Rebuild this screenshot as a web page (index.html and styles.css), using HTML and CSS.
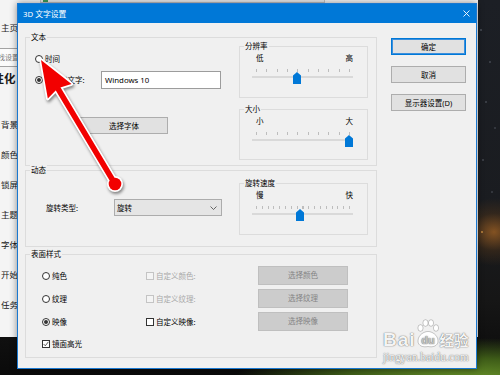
FILE: index.html
```html
<!DOCTYPE html>
<html lang="zh-CN">

<head>
  <meta charset="UTF-8">
  <meta name="viewport" content="width=device-width, initial-scale=1.0">
  <title>3D 文字设置</title>
  <link rel="stylesheet" href="styles.css">
</head>

<body>

  <!-- settings window behind the dialog -->
  <div class="settings">
    <div class="topbar"><span class="topicon"></span></div>
    <div class="nav">
      <div class="nav-home">主页</div>
      <div class="nav-search">查找设置</div>
      <div class="nav-head">个性化</div>
      <ul class="nav-list">
        <li>背景</li>
        <li>颜色</li>
        <li>锁屏界面</li>
        <li>主题</li>
        <li>字体</li>
        <li>开始</li>
        <li>任务栏</li>
      </ul>
    </div>
  </div>

  <div class="dialog">
    <div class="titlebar">
      <span>3D 文字设置</span>
      <svg class="close" width="7" height="7" viewBox="0 0 7 7">
        <path d="M0.5 0.5 L6.5 6.5 M6.5 0.5 L0.5 6.5" stroke="#fff" stroke-width="0.9" fill="none" />
      </svg>
    </div>

    <div class="dialog-body">
      <div class="groups">

        <div class="group group-text">
          <span class="group-title">文本</span>
          <div class="group-main">
            <div class="row row-time"><span class="radio"></span>时间</div>
            <div class="row row-custom">
              <span class="radio on"></span>
              <span class="custom-label">自定义文字:</span>
              <div class="textbox">Windows 10</div>
            </div>
            <div class="btn btn-font">选择字体</div>
          </div>
          <div class="group-side">
            <div class="sub sub-res">
              <span class="group-title">分辨率</span>
              <div class="scale"><span>低</span><span>高</span></div>
              <div class="slider">
                <div class="ticks ticks-10"></div>
                <div class="track"></div>
                <div class="thumb" style="left: 41px"></div>
              </div>
            </div>
            <div class="sub sub-size">
              <span class="group-title">大小</span>
              <div class="scale"><span>小</span><span>大</span></div>
              <div class="slider">
                <div class="ticks ticks-10"></div>
                <div class="track"></div>
                <div class="thumb" style="left: 93px"></div>
              </div>
            </div>
          </div>
        </div>

        <div class="group group-motion">
          <span class="group-title">动态</span>
          <div class="group-main motion-main">
            <div class="row">
              <span class="type-label">旋转类型:</span>
              <div class="select">
                <span>旋转</span>
                <svg width="7" height="4" viewBox="0 0 7 4">
                  <polyline points="0.5,0.5 3.5,3.5 6.5,0.5" stroke="#444" stroke-width="0.8" fill="none" />
                </svg>
              </div>
            </div>
          </div>
          <div class="group-side">
            <div class="sub sub-speed">
              <span class="group-title">旋转速度</span>
              <div class="scale"><span>慢</span><span>快</span></div>
              <div class="slider">
                <div class="ticks ticks-17"></div>
                <div class="track"></div>
                <div class="thumb" style="left: 44px"></div>
              </div>
            </div>
          </div>
        </div>

        <div class="group group-surface">
          <span class="group-title">表面样式</span>
          <div class="surface">
            <div class="opt"><span class="radio"></span>纯色</div>
            <div class="opt disabled"><span class="check"></span>自定义颜色:</div>
            <div class="btn btn-disabled">选择颜色</div>

            <div class="opt"><span class="radio"></span>纹理</div>
            <div class="opt disabled"><span class="check"></span>自定义纹理:</div>
            <div class="btn btn-disabled">选择纹理</div>

            <div class="opt"><span class="radio on"></span>映像</div>
            <div class="opt"><span class="check"></span>自定义映像:</div>
            <div class="btn btn-disabled">选择映像</div>

            <div class="opt opt-last">
              <span class="check">
                <svg width="6" height="6" viewBox="0 0 6 6">
                  <polyline points="0.6,3 2.3,4.8 5.4,0.8" stroke="#333" stroke-width="0.8" fill="none" />
                </svg>
              </span>镜面高光
            </div>
          </div>
        </div>

      </div>

      <div class="actions">
        <div class="btn btn-default">确定</div>
        <div class="btn">取消</div>
        <div class="btn">显示器设置(D)</div>
      </div>
    </div>
  </div>

  <!-- red pointer drawn on top of the screenshot -->
  <svg class="pointer" width="500" height="375" viewBox="0 0 500 375">
    <g class="arrow">
      <line x1="57" y1="87" x2="115" y2="184" stroke="#fff" stroke-width="9" stroke-linecap="round" />
      <polygon points="41,60 71.5,84 57.9,88.3 47.8,98.6" fill="#fff" stroke="#fff" stroke-width="3.5"
        stroke-linejoin="round" />
      <circle cx="115" cy="184" r="8" fill="#fff" />
      <line x1="57" y1="87" x2="115" y2="184" stroke="#f20000" stroke-width="5.5" stroke-linecap="round" />
      <polygon points="41,60 71.5,84 57.9,88.3 47.8,98.6" fill="#f20000" />
      <circle cx="115" cy="184" r="6.3" fill="#f20000" />
    </g>
  </svg>

  <div class="watermark">
    <div class="wm-brand">
      <span class="wm-bai">Bai</span>
      <svg class="wm-paw" width="24" height="29" viewBox="0 0 24 29">
        <ellipse cx="4.5" cy="9" rx="2.6" ry="3.3" />
        <ellipse cx="9.5" cy="4" rx="2.6" ry="3.3" />
        <ellipse cx="15" cy="4" rx="2.6" ry="3.3" />
        <ellipse cx="20" cy="9" rx="2.6" ry="3.3" />
        <path d="M2 22 C2 16 8 12.5 12 12.5 C16 12.5 22 16 22 22 C22 27 17 28.5 12 27.5 C7 28.5 2 27 2 22 Z" />
        <text x="12" y="25" text-anchor="middle">du</text>
      </svg>
      <span class="wm-jy">经验</span>
    </div>
    <div class="wm-url">jingyan.baidu.com</div>
  </div>

</body>

</html>
```

FILE: styles.css
```css
* {
  margin: 0;
  padding: 0;
  box-sizing: border-box;
}

html,
body {
  width: 500px;
  height: 375px;
  overflow: hidden;
}

body {
  position: relative;
  font-family: "Noto Sans", "Noto Sans CJK SC", sans-serif;
  color: #000;
  background:
    radial-gradient(circle 1px at 481px 30px, rgba(190, 200, 220, 0.7), transparent),
    radial-gradient(circle 1px at 490px 62px, rgba(190, 200, 220, 0.6), transparent),
    radial-gradient(circle 1px at 486px 102px, rgba(190, 200, 220, 0.6), transparent),
    radial-gradient(circle 1px at 495px 128px, rgba(190, 200, 220, 0.5), transparent),
    radial-gradient(circle 1px at 483px 160px, rgba(190, 200, 220, 0.6), transparent),
    radial-gradient(circle 1px at 492px 192px, rgba(190, 200, 220, 0.5), transparent),
    radial-gradient(circle 1.5px at 482px 232px, rgba(255, 180, 80, 0.9), transparent),
    radial-gradient(ellipse 40px 34px at 494px 232px, rgba(150, 92, 35, 0.85), rgba(80, 52, 25, 0.45) 55%, transparent 100%),
    radial-gradient(ellipse 240px 46px at 470px 384px, #6f9b2c, #3e5c18 55%, transparent 100%),
    linear-gradient(#1c1f25, #1a1c20 55%, #161616 80%, #0a0a0a);
}

/* settings window in the back */
.settings {
  position: absolute;
  left: -30px;
  top: 0;
  width: 508px;
  height: 337px;
  background: #f4f4f4;
}

.topbar {
  display: flex;
  align-items: flex-end;
  width: 285px;
  height: 17px;
  margin: -14px 0 0 70px;
  padding: 0 0 0 2px;
  background: #e9e9e9;
  border: 1px solid #c3c3c3;
}

.topicon {
  width: 5px;
  height: 4px;
  background: #3a9a5a;
}

.nav {
  padding: 9px 0 0 31px;
  font-family: "Noto Sans CJK SC", sans-serif;
  font-size: 8.5px;
  color: #1a1a1a;
}

.nav-home {
  height: 30px;
  line-height: 30px;
}

.nav-search {
  width: 200px;
  height: 19px;
  margin: 6px 0 0 -15px;
  padding-left: 4px;
  border: 1px solid #a3a3a3;
  background: #fbfbfb;
  font-size: 7px;
  line-height: 17px;
  color: #777;
}

.nav-head {
  height: 22px;
  margin-left: -20px;
  font-size: 11.5px;
  font-weight: bold;
  line-height: 22px;
}

.nav-list {
  list-style: none;
  margin-top: 20px;
}

.nav-list li {
  height: 30px;
  line-height: 30px;
}

/* dialog */
.dialog {
  position: absolute;
  left: 17px;
  top: 3px;
  width: 460px;
  height: 366px;
  border: 1px solid #1a78d0;
  background: #f0f0f0;
  box-shadow: 0 0 7px rgba(0, 0, 0, 0.45);
  font-size: 7.5px;
  line-height: 10px;
}

.titlebar {
  display: flex;
  align-items: center;
  justify-content: space-between;
  height: 19px;
  padding: 0 6px 0 5px;
  background: #0078d7;
  color: #fff;
  font-size: 7.8px;
}

.dialog-body {
  display: flex;
  gap: 14px;
  padding: 14px 10px 0 7px;
}

.groups {
  display: flex;
  flex-direction: column;
  width: 352px;
}

.group {
  position: relative;
  display: flex;
  border: 1px solid #dcdcdc;
}

.group-text {
  height: 129px;
}

.group-motion {
  height: 77px;
  margin-top: 4px;
}

.group-surface {
  display: block;
  height: 104px;
  margin-top: 7px;
}

.group-title {
  position: absolute;
  top: -6px;
  left: 4px;
  padding: 0 1px;
  background: #f0f0f0;
  line-height: 11px;
}

.group-main {
  flex: 1;
  padding: 16px 0 0 9px;
}

.group-side {
  display: flex;
  flex-direction: column;
  width: 129px;
  margin-right: 8px;
}

.row {
  display: flex;
  align-items: center;
  gap: 2px;
}

.row-time {
  height: 10px;
}

.row-custom {
  height: 18px;
  margin-top: 7px;
}

.custom-label {
  width: 54px;
}

.textbox {
  width: 120px;
  height: 18px;
  padding-left: 3px;
  border: 1px solid #9c9c9c;
  background: #fff;
  font-size: 7.8px;
  line-height: 16px;
}

.radio {
  display: grid;
  place-items: center;
  width: 8px;
  height: 8px;
  border: 1px solid #333;
  border-radius: 50%;
  background: #fff;
  flex-shrink: 0;
}

.radio.on::after {
  content: "";
  width: 4px;
  height: 4px;
  border-radius: 50%;
  background: #333;
}

.check {
  display: grid;
  place-items: center;
  width: 8px;
  height: 8px;
  border: 1px solid #333;
  background: #fff;
  flex-shrink: 0;
}

.btn {
  display: flex;
  align-items: center;
  justify-content: center;
  height: 17px;
  border: 1px solid #adadad;
  background: #e1e1e1;
}

.btn-font {
  width: 88px;
  margin: 28px 0 0 45px;
}

.btn-default {
  border-color: #0078d7;
  box-shadow: inset 0 0 0 1px #3c8fdc;
}

.btn-disabled {
  width: 90px;
  height: 19px;
  border-color: #bfbfbf;
  background: #cccccc;
  color: #858585;
}

.actions {
  display: flex;
  flex-direction: column;
  gap: 11px;
  width: 75px;
  margin-top: 1px;
}

/* slider boxes */
.sub {
  position: relative;
  border: 1px solid #dcdcdc;
  padding: 6px 14px 0 12px;
}

.sub-res {
  height: 52px;
  margin-top: 8px;
}

.sub-size {
  height: 51px;
  margin-top: 11px;
}

.sub-speed {
  height: 52px;
  margin-top: 12px;
}

.scale {
  display: flex;
  justify-content: space-between;
  padding-left: 4px;
  line-height: 10px;
}

.slider {
  position: relative;
  height: 16px;
  margin-top: 6px;
}

.ticks {
  width: 94px;
  height: 3px;
  margin: 1px 0 0 4px;
  background: repeating-linear-gradient(90deg, #bdbdbd 0 1px, transparent 1px var(--step));
}

.ticks-10 {
  --step: 10.333px;
}

.ticks-17 {
  --step: 5.8125px;
}

.track {
  height: 2px;
  margin-top: 4px;
  background: #d9d9d9;
}

.thumb {
  position: absolute;
  top: 3px;
  width: 8px;
  height: 12px;
  background: #0078d7;
  clip-path: polygon(50% 0, 100% 30%, 100% 100%, 0 100%, 0 30%);
}

/* motion group */
.motion-main {
  padding: 28px 0 0 20px;
}

.type-label {
  width: 66px;
}

.select {
  display: flex;
  align-items: center;
  justify-content: space-between;
  width: 108px;
  height: 17px;
  padding: 0 4px 0 2px;
  border: 1px solid #acacac;
  background: #e5e5e5;
}

/* surface group */
.surface {
  display: grid;
  grid-template-columns: 104px 112px 90px;
  grid-template-rows: 20px 20px 20px 15px;
  row-gap: 3px;
  align-items: center;
  margin-top: 10px;
  padding-left: 16px;
}

.opt {
  display: flex;
  align-items: center;
  gap: 2px;
  padding-top: 2px;
}

.opt.disabled {
  color: #a8a8a8;
}

.opt.disabled .check {
  border-color: #c4c4c4;
  background: #f4f4f4;
}

.opt-last {
  align-self: end;
  height: 10px;
  padding-top: 0;
}

/* red arrow overlay */
.pointer {
  position: absolute;
  left: 0;
  top: 0;
  pointer-events: none;
}

.arrow {
  filter: drop-shadow(1px 2px 1.5px rgba(0, 0, 0, 0.45));
}

/* watermark */
.watermark {
  position: absolute;
  left: 383px;
  top: 318px;
  color: rgba(255, 255, 255, 0.95);
  text-shadow: 0 0 1px rgba(0, 0, 0, 0.6), 0 0 2px rgba(0, 0, 0, 0.25);
  pointer-events: none;
}

.wm-brand {
  display: flex;
  align-items: flex-end;
  height: 30px;
}

.wm-bai {
  font-family: "Liberation Sans", sans-serif;
  font-size: 19px;
  font-weight: bold;
  line-height: 16px;
  letter-spacing: 1px;
}

.wm-paw {
  fill: rgba(255, 255, 255, 0.95);
  stroke: rgba(0, 0, 0, 0.3);
  stroke-width: 0.7;
}

.wm-paw text {
  fill: #c4c4c4;
  stroke: none;
  font-family: "Liberation Sans", sans-serif;
  font-size: 11px;
  font-weight: bold;
}

.wm-jy {
  font-family: "Noto Sans CJK SC", sans-serif;
  font-size: 14.5px;
  font-weight: bold;
  line-height: 16px;
}

.wm-url {
  margin-top: 3px;
  font-family: "Liberation Serif", serif;
  font-size: 11.5px;
  line-height: 12px;
}
```
